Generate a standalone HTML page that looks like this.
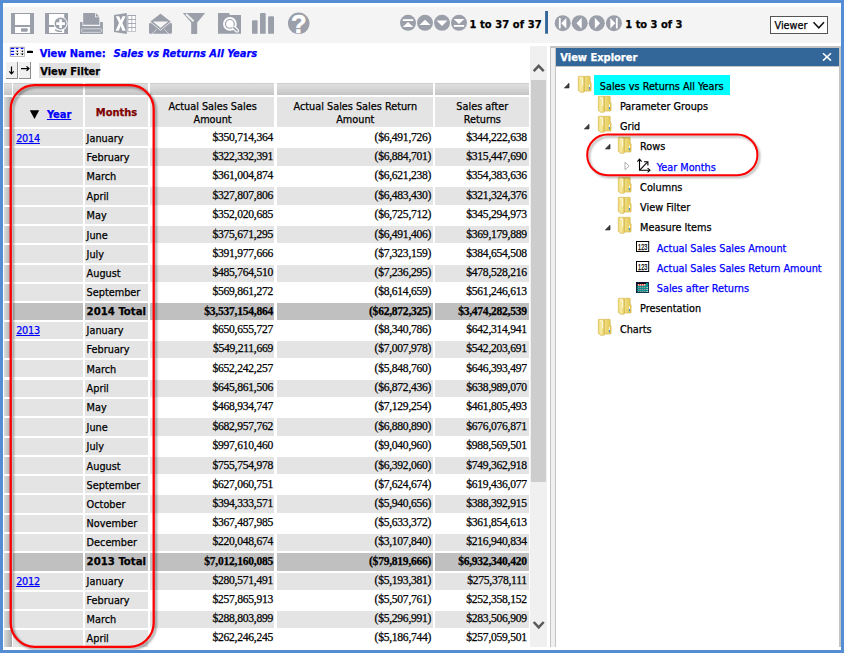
<!DOCTYPE html>
<html lang="en"><head><meta charset="utf-8"><title>Sales vs Returns All Years</title>
<style>
html,body{margin:0;padding:0;background:#fff;}
body{width:844px;height:653px;position:relative;overflow:hidden;font-family:"DejaVu Sans Condensed","Liberation Sans",sans-serif;font-size:10.8px;color:#000;}
.t{position:absolute;white-space:nowrap;line-height:16px;-webkit-text-stroke:0.25px;}
.r{position:absolute;}
svg{position:absolute;overflow:visible;}
a{color:#0000ff;text-decoration:underline;}
</style></head><body>

<div class="r" style="left:3.00px;top:7.00px;width:838.00px;height:35.70px;background:#f4f4f4;"></div>
<svg width="844" height="50" style="left:0;top:0" viewBox="0 0 844 50">
<g fill="#9a9fa9">
<!-- save -->
<rect x="11" y="13" width="23" height="21"/>
<rect x="15" y="14" width="15" height="11" fill="#fff"/>
<rect x="15" y="27" width="15" height="6" fill="#fff"/>
<rect x="21" y="28.3" width="6.7" height="3.5" rx="1"/>
<!-- save as -->
<rect x="45" y="13" width="23" height="21"/>
<rect x="49" y="14" width="15.2" height="11" fill="#fff"/>
<rect x="49" y="27" width="15.2" height="6" fill="#fff"/>
<path d="M55.2 29.6 Q56.8 31.6 62 31.3" fill="none" stroke="#9a9fa9" stroke-width="1.5"/>
<circle cx="60.6" cy="23.6" r="7" fill="#fff"/>
<circle cx="60.6" cy="23.6" r="6"/>
<path d="M59.3 19.2h2.6v3.1h3.1v2.6h-3.1v3.1h-2.6v-3.1h-3.1v-2.6h3.1z" fill="#fff"/>
<!-- print -->
<path d="M83.2 13H95v4.3h4.3v7.4H83.2z"/>
<path d="M95.8 13.1l3.4 3.4h-3.4z"/>
<path d="M80 22.1h2.5v3.9h17.6v-3.9h2.8V34H80z"/>
<rect x="81.6" y="28.8" width="19.8" height="3.5" rx="0.8" fill="none" stroke="#e4e5e8" stroke-width="0.8"/>
<!-- excel -->
<path d="M114 15l12.8-2.1V34L114 32z"/>
<path d="M115.8 16.2h3.4l1.6 4.1 1.7-4.1h3.1l-3.2 6.9 3.4 7.6h-3.4l-1.8-4.7-1.8 4.7h-3.2l3.4-7.6z" fill="#fff"/>
<rect x="127.4" y="15" width="8.6" height="16.6"/>
<g fill="#fff"><rect x="128.3" y="15.9" width="3.2" height="3.2"/><rect x="132.2" y="15.9" width="3.2" height="3.2"/>
<rect x="128.3" y="19.9" width="3.2" height="3.2"/><rect x="132.2" y="19.9" width="3.2" height="3.2"/>
<rect x="128.3" y="23.9" width="3.2" height="3.2"/><rect x="132.2" y="23.9" width="3.2" height="3.2"/>
<rect x="128.3" y="27.9" width="3.2" height="3.2"/><rect x="132.2" y="27.9" width="3.2" height="3.2"/></g>
<!-- mail -->
<rect x="149" y="22.9" width="23" height="10.9" rx="1.3"/>
<path d="M159.6 13.9q.9-.7 1.8 0L171.2 21.6 160.5 30.2 149.8 21.6z" stroke="#f0f0f1" stroke-width="0.9"/>
<path d="M152.8 21.5h15.4l-7.7 6.4z" fill="#f6f6f7"/>
<path d="M156.7 29.2l-4.6 4.7M164.3 29.2l4.6 4.7" fill="none" stroke="#e4e5e8" stroke-width="0.8"/>
<!-- filter -->
<path d="M182.8 13h22.4l-8 9.4V34h-6V22.4z"/>
<path d="M186 14l7.6 7.2" stroke="#f0f0f0" stroke-width="2" fill="none"/>
<!-- folder search -->
<path d="M218 13h11l1 2.1h11V33.8H218z"/>
<circle cx="229.9" cy="23.9" r="5.9" fill="none" stroke="#fff" stroke-width="1.9"/>
<path d="M234.4 28.2l2.5 2.3" stroke="#fff" stroke-width="4.2" stroke-linecap="round" fill="none"/>
<path d="M234 27.8l3 2.8" stroke="#9a9fa9" stroke-width="1.8" stroke-linecap="round" fill="none"/>
<circle cx="229.9" cy="23.9" r="3.8" fill="#fff"/>
<!-- chart -->
<path d="M252 21.2q0-1 1-1h3.6q1 0 1 1V33.7H252z"/>
<path d="M260 14.1q0-1 1-1h3.7q1 0 1 1V33.7H260z"/>
<path d="M268.1 17.2q0-1 1-1h3.9q1 0 1 1V33.7h-5.9z"/>
<!-- help -->
<circle cx="298.7" cy="23.3" r="10.75"/>
</g>
<text x="298.9" y="33" text-anchor="middle" font-family="Liberation Sans, sans-serif" font-weight="bold" font-size="25.5" fill="#fff" stroke="#fff" stroke-width="0.5">?</text>
</svg>
<svg width="844" height="50" style="left:0;top:0" viewBox="0 0 844 50"><circle cx="408" cy="22.8" r="8" fill="#9a9fa9"/><rect x="402.8" y="19.2" width="10.4" height="1.8" fill="#fff"/><path d="M408 22.0l5.3 5h-10.6z" fill="#fff"/><circle cx="425" cy="22.8" r="8" fill="#9a9fa9"/><path d="M425 19.8l5.5 5.2h-11z" fill="#fff"/><circle cx="442" cy="22.8" r="8" fill="#9a9fa9"/><path d="M442 26.0l5.5-5.4h-11z" fill="#fff"/><circle cx="459" cy="22.8" r="8" fill="#9a9fa9"/><rect x="453.8" y="25.0" width="10.4" height="1.8" fill="#fff"/><path d="M459 24.1l5.3-5h-10.6z" fill="#fff"/><circle cx="562.7" cy="23.2" r="8" fill="#9a9fa9"/><rect x="558.9000000000001" y="18.0" width="1.8" height="10.4" fill="#fff"/><path d="M561.3000000000001 23.2l5-5.3v10.6z" fill="#fff"/><circle cx="579.7" cy="23.2" r="8" fill="#9a9fa9"/><path d="M576.5 23.2l5.2-5.5v11z" fill="#fff"/><circle cx="596.8" cy="23.2" r="8" fill="#9a9fa9"/><path d="M600.0 23.2l-5.2-5.5v11z" fill="#fff"/><circle cx="613.9" cy="23.2" r="8" fill="#9a9fa9"/><rect x="615.9" y="18.0" width="1.8" height="10.4" fill="#fff"/><path d="M615.3 23.2l-5-5.3v10.6z" fill="#fff"/><rect x="545.1" y="11" width="2.9" height="22.7" fill="#336699"/></svg>
<div class="t" style="top:16.69px;font-size:11px;font-weight:bold;letter-spacing:0.12px;left:469.40px;">1 to 37 of 37</div>
<div class="t" style="top:16.69px;font-size:11px;font-weight:bold;left:625.30px;">1 to 3 of 3</div>
<div class="r" style="left:770px;top:16px;width:56px;height:16px;border:1px solid #555;background:#fff"></div>
<div class="t" style="top:18.46px;font-size:10.8px;left:774.50px;">Viewer</div>
<svg width="14" height="10" style="left:812px;top:20px" viewBox="0 0 14 10"><path d="M1.5 2.2L6.8 7.8 12 2.2" fill="none" stroke="#111" stroke-width="1.5"/></svg>
<svg width="26" height="12" style="left:9px;top:46px" viewBox="0 0 26 12">
<rect x="1" y="1" width="14.8" height="9.9" fill="#fff"/>
<path d="M1.3 10.6V1.3H15.7" fill="none" stroke="#777" stroke-width="0.7"/>
<path d="M1.3 10.5H15.5V1.5" fill="none" stroke="#aaa" stroke-width="0.8"/>
<g fill="#0000f0"><rect x="1.8" y="1.8" width="3.4" height="1.3"/><rect x="6.8" y="1.8" width="2.6" height="1.3"/><rect x="11.8" y="1.8" width="2.5" height="1.3"/>
<rect x="1.8" y="4.8" width="3.4" height="1.3"/><rect x="1.8" y="7.8" width="3.4" height="1.3"/></g>
<g fill="#bbb"><rect x="6.4" y="4.3" width="3.4" height="0.8"/><rect x="11.3" y="4.3" width="3.4" height="0.8"/></g>
<g fill="#888"><rect x="6.4" y="7.1" width="3.4" height="1"/><rect x="11.3" y="7.1" width="3.4" height="1"/></g>
<g fill="#000"><circle cx="8.4" cy="5.5" r="0.75"/><circle cx="13.4" cy="5.5" r="0.75"/><circle cx="8.4" cy="8.4" r="0.75"/><circle cx="13.4" cy="8.4" r="0.75"/></g>
<rect x="18" y="4.8" width="6" height="2.2" rx="0.6" fill="#000"/></svg>
<div class="t" style="top:45.69px;font-size:11px;font-weight:bold;color:#0000ff;left:39.70px;">View Name:</div>
<div class="t" style="top:45.69px;font-size:11px;font-weight:bold;font-style:italic;color:#0000ff;left:113.50px;">Sales vs Returns All Years</div>
<div class="r" style="left:6px;top:61.5px;width:10.600000000000001px;height:16px;background:#f0f0f0;border-right:1px solid #8c8c8c;border-bottom:1px solid #8c8c8c;"></div>
<div class="r" style="left:19.3px;top:61.5px;width:10.3px;height:16px;background:#f0f0f0;border-right:1px solid #8c8c8c;border-bottom:1px solid #8c8c8c;"></div>
<svg width="30" height="20" style="left:4px;top:60px" viewBox="0 0 30 20">
<g stroke="#000" stroke-width="1.2" fill="none"><path d="M7.5 6.4V13.6M5.3 11.3L7.5 13.8 9.7 11.3"/><path d="M17 8.6H24.8M22.5 6.4L25 8.6 22.5 10.8"/></g></svg>
<div class="r" style="left:38.80px;top:63.20px;width:61.20px;height:14.50px;background:#e0e0e0;"></div>
<div class="t" style="top:64.39px;font-size:11px;font-weight:bold;left:40.20px;">View Filter</div>
<div class="r" style="left:4.00px;top:83.10px;width:8.00px;height:12.20px;background:linear-gradient(#bcbcbc 0,#dedede 8%,#d8d8d8 40%,#c4c4c4 100%);"></div>
<div class="r" style="left:13.30px;top:83.10px;width:69.50px;height:12.20px;background:linear-gradient(#bcbcbc 0,#dedede 8%,#d8d8d8 40%,#c4c4c4 100%);"></div>
<div class="r" style="left:84.70px;top:83.10px;width:63.10px;height:12.20px;background:linear-gradient(#bcbcbc 0,#dedede 8%,#d8d8d8 40%,#c4c4c4 100%);"></div>
<div class="r" style="left:149.60px;top:83.10px;width:124.50px;height:12.20px;background:linear-gradient(#bcbcbc 0,#dedede 8%,#d8d8d8 40%,#c4c4c4 100%);"></div>
<div class="r" style="left:276.60px;top:83.10px;width:156.20px;height:12.20px;background:linear-gradient(#bcbcbc 0,#dedede 8%,#d8d8d8 40%,#c4c4c4 100%);"></div>
<div class="r" style="left:434.90px;top:83.10px;width:94.20px;height:12.20px;background:linear-gradient(#bcbcbc 0,#dedede 8%,#d8d8d8 40%,#c4c4c4 100%);"></div>
<div class="r" style="left:4.00px;top:96.80px;width:8.00px;height:30.00px;background:linear-gradient(90deg,#dcdcdc,#a8a8a8);"></div>
<div class="r" style="left:13.30px;top:96.80px;width:69.50px;height:30.00px;background:#e4e4e4;"></div>
<div class="r" style="left:84.70px;top:96.80px;width:63.10px;height:30.00px;background:#e4e4e4;"></div>
<div class="r" style="left:149.60px;top:96.80px;width:124.50px;height:30.00px;background:#e4e4e4;"></div>
<div class="r" style="left:276.60px;top:96.80px;width:156.20px;height:30.00px;background:#e4e4e4;"></div>
<div class="r" style="left:434.90px;top:96.80px;width:94.20px;height:30.00px;background:#e4e4e4;"></div>
<svg width="12" height="10" style="left:29px;top:109px" viewBox="0 0 12 10"><path d="M0.8 1.2h9.4L5.5 9.9z" fill="#000"/></svg>
<div class="t" style="top:107.49px;font-size:11px;font-weight:bold;color:#0000ff;left:46.90px;"><a>Year</a></div>
<div class="t" style="top:104.99px;font-size:11px;font-weight:bold;color:#800000;left:-33.50px;width:300px;text-align:center;">Months</div>
<div class="t" style="top:99.06px;font-size:10.8px;left:62.60px;width:300px;text-align:center;">Actual Sales Sales</div>
<div class="t" style="top:112.06px;font-size:10.8px;left:62.60px;width:300px;text-align:center;">Amount</div>
<div class="t" style="top:99.06px;font-size:10.8px;left:205.30px;width:300px;text-align:center;">Actual Sales Sales Return</div>
<div class="t" style="top:112.06px;font-size:10.8px;left:205.30px;width:300px;text-align:center;">Amount</div>
<div class="t" style="top:99.06px;font-size:10.8px;left:332.30px;width:300px;text-align:center;">Sales after</div>
<div class="t" style="top:112.06px;font-size:10.8px;left:332.30px;width:300px;text-align:center;">Returns</div>
<div class="r" style="left:4.00px;top:129.10px;width:8.00px;height:17.37px;background:linear-gradient(90deg,#dcdcdc,#a8a8a8);"></div>
<div class="r" style="left:13.30px;top:129.10px;width:69.50px;height:17.37px;background:#e4e4e4;"></div>
<div class="r" style="left:84.70px;top:129.10px;width:63.10px;height:17.37px;background:#e4e4e4;"></div>
<div class="t" style="top:130.66px;font-size:10.8px;color:#0000ff;letter-spacing:-0.25px;left:16.20px;"><a>2014</a></div>
<div class="t" style="top:130.66px;font-size:10.8px;left:86.60px;">January</div>
<div class="t" style="top:129.69px;font-size:11.6px;font-family:'Liberation Serif',serif;letter-spacing:-0.27px;right:571.00px;">$350,714,364</div>
<div class="t" style="top:129.69px;font-size:11.6px;font-family:'Liberation Serif',serif;letter-spacing:-0.27px;right:412.80px;">($6,491,726)</div>
<div class="t" style="top:129.69px;font-size:11.6px;font-family:'Liberation Serif',serif;letter-spacing:-0.27px;right:317.20px;">$344,222,638</div>
<div class="r" style="left:4.00px;top:148.47px;width:8.00px;height:17.37px;background:linear-gradient(90deg,#dcdcdc,#a8a8a8);"></div>
<div class="r" style="left:13.30px;top:148.47px;width:69.50px;height:17.37px;background:#e4e4e4;"></div>
<div class="r" style="left:84.70px;top:148.47px;width:63.10px;height:17.37px;background:#e4e4e4;"></div>
<div class="r" style="left:149.60px;top:148.47px;width:124.50px;height:17.37px;background:#e4e4e4;"></div>
<div class="r" style="left:276.60px;top:148.47px;width:156.20px;height:17.37px;background:#e4e4e4;"></div>
<div class="r" style="left:434.90px;top:148.47px;width:94.20px;height:17.37px;background:#e4e4e4;"></div>
<div class="t" style="top:150.03px;font-size:10.8px;left:86.60px;">February</div>
<div class="t" style="top:149.05px;font-size:11.6px;font-family:'Liberation Serif',serif;letter-spacing:-0.27px;right:571.00px;">$322,332,391</div>
<div class="t" style="top:149.05px;font-size:11.6px;font-family:'Liberation Serif',serif;letter-spacing:-0.27px;right:412.80px;">($6,884,701)</div>
<div class="t" style="top:149.05px;font-size:11.6px;font-family:'Liberation Serif',serif;letter-spacing:-0.27px;right:317.20px;">$315,447,690</div>
<div class="r" style="left:4.00px;top:167.83px;width:8.00px;height:17.37px;background:linear-gradient(90deg,#dcdcdc,#a8a8a8);"></div>
<div class="r" style="left:13.30px;top:167.83px;width:69.50px;height:17.37px;background:#e4e4e4;"></div>
<div class="r" style="left:84.70px;top:167.83px;width:63.10px;height:17.37px;background:#e4e4e4;"></div>
<div class="t" style="top:169.40px;font-size:10.8px;left:86.60px;">March</div>
<div class="t" style="top:168.42px;font-size:11.6px;font-family:'Liberation Serif',serif;letter-spacing:-0.27px;right:571.00px;">$361,004,874</div>
<div class="t" style="top:168.42px;font-size:11.6px;font-family:'Liberation Serif',serif;letter-spacing:-0.27px;right:412.80px;">($6,621,238)</div>
<div class="t" style="top:168.42px;font-size:11.6px;font-family:'Liberation Serif',serif;letter-spacing:-0.27px;right:317.20px;">$354,383,636</div>
<div class="r" style="left:4.00px;top:187.20px;width:8.00px;height:17.50px;background:linear-gradient(90deg,#dcdcdc,#a8a8a8);"></div>
<div class="r" style="left:13.30px;top:187.20px;width:69.50px;height:17.50px;background:#e4e4e4;"></div>
<div class="r" style="left:84.70px;top:187.20px;width:63.10px;height:17.50px;background:#e4e4e4;"></div>
<div class="r" style="left:149.60px;top:187.20px;width:124.50px;height:17.50px;background:#e4e4e4;"></div>
<div class="r" style="left:276.60px;top:187.20px;width:156.20px;height:17.50px;background:#e4e4e4;"></div>
<div class="r" style="left:434.90px;top:187.20px;width:94.20px;height:17.50px;background:#e4e4e4;"></div>
<div class="t" style="top:188.76px;font-size:10.8px;left:86.60px;">April</div>
<div class="t" style="top:187.78px;font-size:11.6px;font-family:'Liberation Serif',serif;letter-spacing:-0.27px;right:571.00px;">$327,807,806</div>
<div class="t" style="top:187.78px;font-size:11.6px;font-family:'Liberation Serif',serif;letter-spacing:-0.27px;right:412.80px;">($6,483,430)</div>
<div class="t" style="top:187.78px;font-size:11.6px;font-family:'Liberation Serif',serif;letter-spacing:-0.27px;right:317.20px;">$321,324,376</div>
<div class="r" style="left:4.00px;top:206.70px;width:8.00px;height:17.50px;background:linear-gradient(90deg,#dcdcdc,#a8a8a8);"></div>
<div class="r" style="left:13.30px;top:206.70px;width:69.50px;height:17.50px;background:#e4e4e4;"></div>
<div class="r" style="left:84.70px;top:206.70px;width:63.10px;height:17.50px;background:#e4e4e4;"></div>
<div class="t" style="top:208.26px;font-size:10.8px;left:86.60px;">May</div>
<div class="t" style="top:207.28px;font-size:11.6px;font-family:'Liberation Serif',serif;letter-spacing:-0.27px;right:571.00px;">$352,020,685</div>
<div class="t" style="top:207.28px;font-size:11.6px;font-family:'Liberation Serif',serif;letter-spacing:-0.27px;right:412.80px;">($6,725,712)</div>
<div class="t" style="top:207.28px;font-size:11.6px;font-family:'Liberation Serif',serif;letter-spacing:-0.27px;right:317.20px;">$345,294,973</div>
<div class="r" style="left:4.00px;top:226.20px;width:8.00px;height:17.23px;background:linear-gradient(90deg,#dcdcdc,#a8a8a8);"></div>
<div class="r" style="left:13.30px;top:226.20px;width:69.50px;height:17.23px;background:#e4e4e4;"></div>
<div class="r" style="left:84.70px;top:226.20px;width:63.10px;height:17.23px;background:#e4e4e4;"></div>
<div class="r" style="left:149.60px;top:226.20px;width:124.50px;height:17.23px;background:#e4e4e4;"></div>
<div class="r" style="left:276.60px;top:226.20px;width:156.20px;height:17.23px;background:#e4e4e4;"></div>
<div class="r" style="left:434.90px;top:226.20px;width:94.20px;height:17.23px;background:#e4e4e4;"></div>
<div class="t" style="top:227.76px;font-size:10.8px;left:86.60px;">June</div>
<div class="t" style="top:226.78px;font-size:11.6px;font-family:'Liberation Serif',serif;letter-spacing:-0.27px;right:571.00px;">$375,671,295</div>
<div class="t" style="top:226.78px;font-size:11.6px;font-family:'Liberation Serif',serif;letter-spacing:-0.27px;right:412.80px;">($6,491,406)</div>
<div class="t" style="top:226.78px;font-size:11.6px;font-family:'Liberation Serif',serif;letter-spacing:-0.27px;right:317.20px;">$369,179,889</div>
<div class="r" style="left:4.00px;top:245.43px;width:8.00px;height:17.22px;background:linear-gradient(90deg,#dcdcdc,#a8a8a8);"></div>
<div class="r" style="left:13.30px;top:245.43px;width:69.50px;height:17.22px;background:#e4e4e4;"></div>
<div class="r" style="left:84.70px;top:245.43px;width:63.10px;height:17.22px;background:#e4e4e4;"></div>
<div class="t" style="top:246.99px;font-size:10.8px;left:86.60px;">July</div>
<div class="t" style="top:246.01px;font-size:11.6px;font-family:'Liberation Serif',serif;letter-spacing:-0.27px;right:571.00px;">$391,977,666</div>
<div class="t" style="top:246.01px;font-size:11.6px;font-family:'Liberation Serif',serif;letter-spacing:-0.27px;right:412.80px;">($7,323,159)</div>
<div class="t" style="top:246.01px;font-size:11.6px;font-family:'Liberation Serif',serif;letter-spacing:-0.27px;right:317.20px;">$384,654,508</div>
<div class="r" style="left:4.00px;top:264.65px;width:8.00px;height:17.23px;background:linear-gradient(90deg,#dcdcdc,#a8a8a8);"></div>
<div class="r" style="left:13.30px;top:264.65px;width:69.50px;height:17.23px;background:#e4e4e4;"></div>
<div class="r" style="left:84.70px;top:264.65px;width:63.10px;height:17.23px;background:#e4e4e4;"></div>
<div class="r" style="left:149.60px;top:264.65px;width:124.50px;height:17.23px;background:#e4e4e4;"></div>
<div class="r" style="left:276.60px;top:264.65px;width:156.20px;height:17.23px;background:#e4e4e4;"></div>
<div class="r" style="left:434.90px;top:264.65px;width:94.20px;height:17.23px;background:#e4e4e4;"></div>
<div class="t" style="top:266.21px;font-size:10.8px;left:86.60px;">August</div>
<div class="t" style="top:265.23px;font-size:11.6px;font-family:'Liberation Serif',serif;letter-spacing:-0.27px;right:571.00px;">$485,764,510</div>
<div class="t" style="top:265.23px;font-size:11.6px;font-family:'Liberation Serif',serif;letter-spacing:-0.27px;right:412.80px;">($7,236,295)</div>
<div class="t" style="top:265.23px;font-size:11.6px;font-family:'Liberation Serif',serif;letter-spacing:-0.27px;right:317.20px;">$478,528,216</div>
<div class="r" style="left:4.00px;top:283.88px;width:8.00px;height:17.23px;background:linear-gradient(90deg,#dcdcdc,#a8a8a8);"></div>
<div class="r" style="left:13.30px;top:283.88px;width:69.50px;height:17.23px;background:#e4e4e4;"></div>
<div class="r" style="left:84.70px;top:283.88px;width:63.10px;height:17.23px;background:#e4e4e4;"></div>
<div class="t" style="top:285.44px;font-size:10.8px;left:86.60px;">September</div>
<div class="t" style="top:284.46px;font-size:11.6px;font-family:'Liberation Serif',serif;letter-spacing:-0.27px;right:571.00px;">$569,861,272</div>
<div class="t" style="top:284.46px;font-size:11.6px;font-family:'Liberation Serif',serif;letter-spacing:-0.27px;right:412.80px;">($8,614,659)</div>
<div class="t" style="top:284.46px;font-size:11.6px;font-family:'Liberation Serif',serif;letter-spacing:-0.27px;right:317.20px;">$561,246,613</div>
<div class="r" style="left:4.00px;top:303.10px;width:8.00px;height:16.50px;background:linear-gradient(90deg,#dcdcdc,#a8a8a8);"></div>
<div class="r" style="left:13.30px;top:303.10px;width:69.50px;height:16.50px;background:#c0c0c0;"></div>
<div class="r" style="left:84.70px;top:303.10px;width:63.10px;height:16.50px;background:#c0c0c0;"></div>
<div class="r" style="left:149.60px;top:303.10px;width:124.50px;height:16.50px;background:#c0c0c0;"></div>
<div class="r" style="left:276.60px;top:303.10px;width:156.20px;height:16.50px;background:#c0c0c0;"></div>
<div class="r" style="left:434.90px;top:303.10px;width:94.20px;height:16.50px;background:#c0c0c0;"></div>
<div class="t" style="top:304.49px;font-size:11.3px;font-weight:bold;left:86.60px;">2014 Total</div>
<div class="t" style="top:303.69px;font-size:11.6px;font-family:'Liberation Serif',serif;font-weight:bold;letter-spacing:-0.27px;right:571.00px;">$3,537,154,864</div>
<div class="t" style="top:303.69px;font-size:11.6px;font-family:'Liberation Serif',serif;font-weight:bold;letter-spacing:-0.27px;right:412.80px;">($62,872,325)</div>
<div class="t" style="top:303.69px;font-size:11.6px;font-family:'Liberation Serif',serif;font-weight:bold;letter-spacing:-0.27px;right:317.20px;">$3,474,282,539</div>
<div class="r" style="left:4.00px;top:321.60px;width:8.00px;height:17.30px;background:linear-gradient(90deg,#dcdcdc,#a8a8a8);"></div>
<div class="r" style="left:13.30px;top:321.60px;width:69.50px;height:17.30px;background:#e4e4e4;"></div>
<div class="r" style="left:84.70px;top:321.60px;width:63.10px;height:17.30px;background:#e4e4e4;"></div>
<div class="t" style="top:323.16px;font-size:10.8px;color:#0000ff;letter-spacing:-0.25px;left:16.20px;"><a>2013</a></div>
<div class="t" style="top:323.16px;font-size:10.8px;left:86.60px;">January</div>
<div class="t" style="top:322.19px;font-size:11.6px;font-family:'Liberation Serif',serif;letter-spacing:-0.27px;right:571.00px;">$650,655,727</div>
<div class="t" style="top:322.19px;font-size:11.6px;font-family:'Liberation Serif',serif;letter-spacing:-0.27px;right:412.80px;">($8,340,786)</div>
<div class="t" style="top:322.19px;font-size:11.6px;font-family:'Liberation Serif',serif;letter-spacing:-0.27px;right:317.20px;">$642,314,941</div>
<div class="r" style="left:4.00px;top:340.90px;width:8.00px;height:17.30px;background:linear-gradient(90deg,#dcdcdc,#a8a8a8);"></div>
<div class="r" style="left:13.30px;top:340.90px;width:69.50px;height:17.30px;background:#e4e4e4;"></div>
<div class="r" style="left:84.70px;top:340.90px;width:63.10px;height:17.30px;background:#e4e4e4;"></div>
<div class="r" style="left:149.60px;top:340.90px;width:124.50px;height:17.30px;background:#e4e4e4;"></div>
<div class="r" style="left:276.60px;top:340.90px;width:156.20px;height:17.30px;background:#e4e4e4;"></div>
<div class="r" style="left:434.90px;top:340.90px;width:94.20px;height:17.30px;background:#e4e4e4;"></div>
<div class="t" style="top:342.46px;font-size:10.8px;left:86.60px;">February</div>
<div class="t" style="top:341.49px;font-size:11.6px;font-family:'Liberation Serif',serif;letter-spacing:-0.27px;right:571.00px;">$549,211,669</div>
<div class="t" style="top:341.49px;font-size:11.6px;font-family:'Liberation Serif',serif;letter-spacing:-0.27px;right:412.80px;">($7,007,978)</div>
<div class="t" style="top:341.49px;font-size:11.6px;font-family:'Liberation Serif',serif;letter-spacing:-0.27px;right:317.20px;">$542,203,691</div>
<div class="r" style="left:4.00px;top:360.20px;width:8.00px;height:17.30px;background:linear-gradient(90deg,#dcdcdc,#a8a8a8);"></div>
<div class="r" style="left:13.30px;top:360.20px;width:69.50px;height:17.30px;background:#e4e4e4;"></div>
<div class="r" style="left:84.70px;top:360.20px;width:63.10px;height:17.30px;background:#e4e4e4;"></div>
<div class="t" style="top:361.76px;font-size:10.8px;left:86.60px;">March</div>
<div class="t" style="top:360.79px;font-size:11.6px;font-family:'Liberation Serif',serif;letter-spacing:-0.27px;right:571.00px;">$652,242,257</div>
<div class="t" style="top:360.79px;font-size:11.6px;font-family:'Liberation Serif',serif;letter-spacing:-0.27px;right:412.80px;">($5,848,760)</div>
<div class="t" style="top:360.79px;font-size:11.6px;font-family:'Liberation Serif',serif;letter-spacing:-0.27px;right:317.20px;">$646,393,497</div>
<div class="r" style="left:4.00px;top:379.50px;width:8.00px;height:17.30px;background:linear-gradient(90deg,#dcdcdc,#a8a8a8);"></div>
<div class="r" style="left:13.30px;top:379.50px;width:69.50px;height:17.30px;background:#e4e4e4;"></div>
<div class="r" style="left:84.70px;top:379.50px;width:63.10px;height:17.30px;background:#e4e4e4;"></div>
<div class="r" style="left:149.60px;top:379.50px;width:124.50px;height:17.30px;background:#e4e4e4;"></div>
<div class="r" style="left:276.60px;top:379.50px;width:156.20px;height:17.30px;background:#e4e4e4;"></div>
<div class="r" style="left:434.90px;top:379.50px;width:94.20px;height:17.30px;background:#e4e4e4;"></div>
<div class="t" style="top:381.06px;font-size:10.8px;left:86.60px;">April</div>
<div class="t" style="top:380.08px;font-size:11.6px;font-family:'Liberation Serif',serif;letter-spacing:-0.27px;right:571.00px;">$645,861,506</div>
<div class="t" style="top:380.08px;font-size:11.6px;font-family:'Liberation Serif',serif;letter-spacing:-0.27px;right:412.80px;">($6,872,436)</div>
<div class="t" style="top:380.08px;font-size:11.6px;font-family:'Liberation Serif',serif;letter-spacing:-0.27px;right:317.20px;">$638,989,070</div>
<div class="r" style="left:4.00px;top:398.80px;width:8.00px;height:17.30px;background:linear-gradient(90deg,#dcdcdc,#a8a8a8);"></div>
<div class="r" style="left:13.30px;top:398.80px;width:69.50px;height:17.30px;background:#e4e4e4;"></div>
<div class="r" style="left:84.70px;top:398.80px;width:63.10px;height:17.30px;background:#e4e4e4;"></div>
<div class="t" style="top:400.36px;font-size:10.8px;left:86.60px;">May</div>
<div class="t" style="top:399.38px;font-size:11.6px;font-family:'Liberation Serif',serif;letter-spacing:-0.27px;right:571.00px;">$468,934,747</div>
<div class="t" style="top:399.38px;font-size:11.6px;font-family:'Liberation Serif',serif;letter-spacing:-0.27px;right:412.80px;">($7,129,254)</div>
<div class="t" style="top:399.38px;font-size:11.6px;font-family:'Liberation Serif',serif;letter-spacing:-0.27px;right:317.20px;">$461,805,493</div>
<div class="r" style="left:4.00px;top:418.10px;width:8.00px;height:17.45px;background:linear-gradient(90deg,#dcdcdc,#a8a8a8);"></div>
<div class="r" style="left:13.30px;top:418.10px;width:69.50px;height:17.45px;background:#e4e4e4;"></div>
<div class="r" style="left:84.70px;top:418.10px;width:63.10px;height:17.45px;background:#e4e4e4;"></div>
<div class="r" style="left:149.60px;top:418.10px;width:124.50px;height:17.45px;background:#e4e4e4;"></div>
<div class="r" style="left:276.60px;top:418.10px;width:156.20px;height:17.45px;background:#e4e4e4;"></div>
<div class="r" style="left:434.90px;top:418.10px;width:94.20px;height:17.45px;background:#e4e4e4;"></div>
<div class="t" style="top:419.66px;font-size:10.8px;left:86.60px;">June</div>
<div class="t" style="top:418.69px;font-size:11.6px;font-family:'Liberation Serif',serif;letter-spacing:-0.27px;right:571.00px;">$682,957,762</div>
<div class="t" style="top:418.69px;font-size:11.6px;font-family:'Liberation Serif',serif;letter-spacing:-0.27px;right:412.80px;">($6,880,890)</div>
<div class="t" style="top:418.69px;font-size:11.6px;font-family:'Liberation Serif',serif;letter-spacing:-0.27px;right:317.20px;">$676,076,871</div>
<div class="r" style="left:4.00px;top:437.55px;width:8.00px;height:17.45px;background:linear-gradient(90deg,#dcdcdc,#a8a8a8);"></div>
<div class="r" style="left:13.30px;top:437.55px;width:69.50px;height:17.45px;background:#e4e4e4;"></div>
<div class="r" style="left:84.70px;top:437.55px;width:63.10px;height:17.45px;background:#e4e4e4;"></div>
<div class="t" style="top:439.11px;font-size:10.8px;left:86.60px;">July</div>
<div class="t" style="top:438.13px;font-size:11.6px;font-family:'Liberation Serif',serif;letter-spacing:-0.27px;right:571.00px;">$997,610,460</div>
<div class="t" style="top:438.13px;font-size:11.6px;font-family:'Liberation Serif',serif;letter-spacing:-0.27px;right:412.80px;">($9,040,960)</div>
<div class="t" style="top:438.13px;font-size:11.6px;font-family:'Liberation Serif',serif;letter-spacing:-0.27px;right:317.20px;">$988,569,501</div>
<div class="r" style="left:4.00px;top:457.00px;width:8.00px;height:17.20px;background:linear-gradient(90deg,#dcdcdc,#a8a8a8);"></div>
<div class="r" style="left:13.30px;top:457.00px;width:69.50px;height:17.20px;background:#e4e4e4;"></div>
<div class="r" style="left:84.70px;top:457.00px;width:63.10px;height:17.20px;background:#e4e4e4;"></div>
<div class="r" style="left:149.60px;top:457.00px;width:124.50px;height:17.20px;background:#e4e4e4;"></div>
<div class="r" style="left:276.60px;top:457.00px;width:156.20px;height:17.20px;background:#e4e4e4;"></div>
<div class="r" style="left:434.90px;top:457.00px;width:94.20px;height:17.20px;background:#e4e4e4;"></div>
<div class="t" style="top:458.56px;font-size:10.8px;left:86.60px;">August</div>
<div class="t" style="top:457.58px;font-size:11.6px;font-family:'Liberation Serif',serif;letter-spacing:-0.27px;right:571.00px;">$755,754,978</div>
<div class="t" style="top:457.58px;font-size:11.6px;font-family:'Liberation Serif',serif;letter-spacing:-0.27px;right:412.80px;">($6,392,060)</div>
<div class="t" style="top:457.58px;font-size:11.6px;font-family:'Liberation Serif',serif;letter-spacing:-0.27px;right:317.20px;">$749,362,918</div>
<div class="r" style="left:4.00px;top:476.20px;width:8.00px;height:17.20px;background:linear-gradient(90deg,#dcdcdc,#a8a8a8);"></div>
<div class="r" style="left:13.30px;top:476.20px;width:69.50px;height:17.20px;background:#e4e4e4;"></div>
<div class="r" style="left:84.70px;top:476.20px;width:63.10px;height:17.20px;background:#e4e4e4;"></div>
<div class="t" style="top:477.76px;font-size:10.8px;left:86.60px;">September</div>
<div class="t" style="top:476.78px;font-size:11.6px;font-family:'Liberation Serif',serif;letter-spacing:-0.27px;right:571.00px;">$627,060,751</div>
<div class="t" style="top:476.78px;font-size:11.6px;font-family:'Liberation Serif',serif;letter-spacing:-0.27px;right:412.80px;">($7,624,674)</div>
<div class="t" style="top:476.78px;font-size:11.6px;font-family:'Liberation Serif',serif;letter-spacing:-0.27px;right:317.20px;">$619,436,077</div>
<div class="r" style="left:4.00px;top:495.40px;width:8.00px;height:17.20px;background:linear-gradient(90deg,#dcdcdc,#a8a8a8);"></div>
<div class="r" style="left:13.30px;top:495.40px;width:69.50px;height:17.20px;background:#e4e4e4;"></div>
<div class="r" style="left:84.70px;top:495.40px;width:63.10px;height:17.20px;background:#e4e4e4;"></div>
<div class="r" style="left:149.60px;top:495.40px;width:124.50px;height:17.20px;background:#e4e4e4;"></div>
<div class="r" style="left:276.60px;top:495.40px;width:156.20px;height:17.20px;background:#e4e4e4;"></div>
<div class="r" style="left:434.90px;top:495.40px;width:94.20px;height:17.20px;background:#e4e4e4;"></div>
<div class="t" style="top:496.96px;font-size:10.8px;left:86.60px;">October</div>
<div class="t" style="top:495.98px;font-size:11.6px;font-family:'Liberation Serif',serif;letter-spacing:-0.27px;right:571.00px;">$394,333,571</div>
<div class="t" style="top:495.98px;font-size:11.6px;font-family:'Liberation Serif',serif;letter-spacing:-0.27px;right:412.80px;">($5,940,656)</div>
<div class="t" style="top:495.98px;font-size:11.6px;font-family:'Liberation Serif',serif;letter-spacing:-0.27px;right:317.20px;">$388,392,915</div>
<div class="r" style="left:4.00px;top:514.60px;width:8.00px;height:17.20px;background:linear-gradient(90deg,#dcdcdc,#a8a8a8);"></div>
<div class="r" style="left:13.30px;top:514.60px;width:69.50px;height:17.20px;background:#e4e4e4;"></div>
<div class="r" style="left:84.70px;top:514.60px;width:63.10px;height:17.20px;background:#e4e4e4;"></div>
<div class="t" style="top:516.16px;font-size:10.8px;left:86.60px;">November</div>
<div class="t" style="top:515.19px;font-size:11.6px;font-family:'Liberation Serif',serif;letter-spacing:-0.27px;right:571.00px;">$367,487,985</div>
<div class="t" style="top:515.19px;font-size:11.6px;font-family:'Liberation Serif',serif;letter-spacing:-0.27px;right:412.80px;">($5,633,372)</div>
<div class="t" style="top:515.19px;font-size:11.6px;font-family:'Liberation Serif',serif;letter-spacing:-0.27px;right:317.20px;">$361,854,613</div>
<div class="r" style="left:4.00px;top:533.80px;width:8.00px;height:17.20px;background:linear-gradient(90deg,#dcdcdc,#a8a8a8);"></div>
<div class="r" style="left:13.30px;top:533.80px;width:69.50px;height:17.20px;background:#e4e4e4;"></div>
<div class="r" style="left:84.70px;top:533.80px;width:63.10px;height:17.20px;background:#e4e4e4;"></div>
<div class="r" style="left:149.60px;top:533.80px;width:124.50px;height:17.20px;background:#e4e4e4;"></div>
<div class="r" style="left:276.60px;top:533.80px;width:156.20px;height:17.20px;background:#e4e4e4;"></div>
<div class="r" style="left:434.90px;top:533.80px;width:94.20px;height:17.20px;background:#e4e4e4;"></div>
<div class="t" style="top:535.36px;font-size:10.8px;left:86.60px;">December</div>
<div class="t" style="top:534.38px;font-size:11.6px;font-family:'Liberation Serif',serif;letter-spacing:-0.27px;right:571.00px;">$220,048,674</div>
<div class="t" style="top:534.38px;font-size:11.6px;font-family:'Liberation Serif',serif;letter-spacing:-0.27px;right:412.80px;">($3,107,840)</div>
<div class="t" style="top:534.38px;font-size:11.6px;font-family:'Liberation Serif',serif;letter-spacing:-0.27px;right:317.20px;">$216,940,834</div>
<div class="r" style="left:4.00px;top:553.00px;width:8.00px;height:17.90px;background:linear-gradient(90deg,#dcdcdc,#a8a8a8);"></div>
<div class="r" style="left:13.30px;top:553.00px;width:69.50px;height:17.90px;background:#c0c0c0;"></div>
<div class="r" style="left:84.70px;top:553.00px;width:63.10px;height:17.90px;background:#c0c0c0;"></div>
<div class="r" style="left:149.60px;top:553.00px;width:124.50px;height:17.90px;background:#c0c0c0;"></div>
<div class="r" style="left:276.60px;top:553.00px;width:156.20px;height:17.90px;background:#c0c0c0;"></div>
<div class="r" style="left:434.90px;top:553.00px;width:94.20px;height:17.90px;background:#c0c0c0;"></div>
<div class="t" style="top:554.39px;font-size:11.3px;font-weight:bold;left:86.60px;">2013 Total</div>
<div class="t" style="top:553.59px;font-size:11.6px;font-family:'Liberation Serif',serif;font-weight:bold;letter-spacing:-0.27px;right:571.00px;">$7,012,160,085</div>
<div class="t" style="top:553.59px;font-size:11.6px;font-family:'Liberation Serif',serif;font-weight:bold;letter-spacing:-0.27px;right:412.80px;">($79,819,666)</div>
<div class="t" style="top:553.59px;font-size:11.6px;font-family:'Liberation Serif',serif;font-weight:bold;letter-spacing:-0.27px;right:317.20px;">$6,932,340,420</div>
<div class="r" style="left:4.00px;top:572.90px;width:8.00px;height:16.70px;background:linear-gradient(90deg,#dcdcdc,#a8a8a8);"></div>
<div class="r" style="left:13.30px;top:572.90px;width:69.50px;height:16.70px;background:#e4e4e4;"></div>
<div class="r" style="left:84.70px;top:572.90px;width:63.10px;height:16.70px;background:#e4e4e4;"></div>
<div class="r" style="left:149.60px;top:572.90px;width:124.50px;height:16.70px;background:#e4e4e4;"></div>
<div class="r" style="left:276.60px;top:572.90px;width:156.20px;height:16.70px;background:#e4e4e4;"></div>
<div class="r" style="left:434.90px;top:572.90px;width:94.20px;height:16.70px;background:#e4e4e4;"></div>
<div class="t" style="top:574.46px;font-size:10.8px;color:#0000ff;letter-spacing:-0.25px;left:16.20px;"><a>2012</a></div>
<div class="t" style="top:574.46px;font-size:10.8px;left:86.60px;">January</div>
<div class="t" style="top:573.49px;font-size:11.6px;font-family:'Liberation Serif',serif;letter-spacing:-0.27px;right:571.00px;">$280,571,491</div>
<div class="t" style="top:573.49px;font-size:11.6px;font-family:'Liberation Serif',serif;letter-spacing:-0.27px;right:412.80px;">($5,193,381)</div>
<div class="t" style="top:573.49px;font-size:11.6px;font-family:'Liberation Serif',serif;letter-spacing:-0.27px;right:317.20px;">$275,378,111</div>
<div class="r" style="left:4.00px;top:591.60px;width:8.00px;height:17.10px;background:linear-gradient(90deg,#dcdcdc,#a8a8a8);"></div>
<div class="r" style="left:13.30px;top:591.60px;width:69.50px;height:17.10px;background:#e4e4e4;"></div>
<div class="r" style="left:84.70px;top:591.60px;width:63.10px;height:17.10px;background:#e4e4e4;"></div>
<div class="t" style="top:593.16px;font-size:10.8px;left:86.60px;">February</div>
<div class="t" style="top:592.19px;font-size:11.6px;font-family:'Liberation Serif',serif;letter-spacing:-0.27px;right:571.00px;">$257,865,913</div>
<div class="t" style="top:592.19px;font-size:11.6px;font-family:'Liberation Serif',serif;letter-spacing:-0.27px;right:412.80px;">($5,507,761)</div>
<div class="t" style="top:592.19px;font-size:11.6px;font-family:'Liberation Serif',serif;letter-spacing:-0.27px;right:317.20px;">$252,358,152</div>
<div class="r" style="left:4.00px;top:610.70px;width:8.00px;height:17.20px;background:linear-gradient(90deg,#dcdcdc,#a8a8a8);"></div>
<div class="r" style="left:13.30px;top:610.70px;width:69.50px;height:17.20px;background:#e4e4e4;"></div>
<div class="r" style="left:84.70px;top:610.70px;width:63.10px;height:17.20px;background:#e4e4e4;"></div>
<div class="r" style="left:149.60px;top:610.70px;width:124.50px;height:17.20px;background:#e4e4e4;"></div>
<div class="r" style="left:276.60px;top:610.70px;width:156.20px;height:17.20px;background:#e4e4e4;"></div>
<div class="r" style="left:434.90px;top:610.70px;width:94.20px;height:17.20px;background:#e4e4e4;"></div>
<div class="t" style="top:612.26px;font-size:10.8px;left:86.60px;">March</div>
<div class="t" style="top:611.29px;font-size:11.6px;font-family:'Liberation Serif',serif;letter-spacing:-0.27px;right:571.00px;">$288,803,899</div>
<div class="t" style="top:611.29px;font-size:11.6px;font-family:'Liberation Serif',serif;letter-spacing:-0.27px;right:412.80px;">($5,296,991)</div>
<div class="t" style="top:611.29px;font-size:11.6px;font-family:'Liberation Serif',serif;letter-spacing:-0.27px;right:317.20px;">$283,506,909</div>
<div class="r" style="left:4.00px;top:629.90px;width:8.00px;height:16.90px;background:linear-gradient(90deg,#dcdcdc,#a8a8a8);"></div>
<div class="r" style="left:13.30px;top:629.90px;width:69.50px;height:16.90px;background:#e4e4e4;"></div>
<div class="r" style="left:84.70px;top:629.90px;width:63.10px;height:16.90px;background:#e4e4e4;"></div>
<div class="t" style="top:631.46px;font-size:10.8px;left:86.60px;">April</div>
<div class="t" style="top:630.49px;font-size:11.6px;font-family:'Liberation Serif',serif;letter-spacing:-0.27px;right:571.00px;">$262,246,245</div>
<div class="t" style="top:630.49px;font-size:11.6px;font-family:'Liberation Serif',serif;letter-spacing:-0.27px;right:412.80px;">($5,186,744)</div>
<div class="t" style="top:630.49px;font-size:11.6px;font-family:'Liberation Serif',serif;letter-spacing:-0.27px;right:317.20px;">$257,059,501</div>
<div class="r" style="left:530.30px;top:46.20px;width:16.70px;height:600.70px;background:#f0f0f0;"></div>
<div class="r" style="left:531.20px;top:79.80px;width:14.70px;height:402.20px;background:#cdcdcd;"></div>
<svg width="16" height="12" style="left:531px;top:61px" viewBox="0 0 16 12"><path d="M2.7 10.2L7.7 4.8 12.7 10.2" fill="none" stroke="#5a5a5a" stroke-width="2.5"/></svg>
<svg width="16" height="12" style="left:531px;top:619px" viewBox="0 0 16 12"><path d="M2.7 3L7.7 8.4 12.7 3" fill="none" stroke="#5a5a5a" stroke-width="2.5"/></svg>
<div class="r" style="left:550.20px;top:46.40px;width:290.80px;height:600.40px;background:#c4c4c4;"></div>
<div class="r" style="left:551.40px;top:47.60px;width:287.90px;height:599.20px;background:#f0f0f0;"></div>
<div class="r" style="left:554.80px;top:47.60px;width:284.50px;height:599.20px;background:#c4c4c4;"></div>
<div class="r" style="left:556.00px;top:48.20px;width:283.30px;height:598.60px;background:#fff;"></div>
<div class="r" style="left:556.00px;top:48.20px;width:283.30px;height:17.70px;background:#336699;"></div>
<div class="r" style="left:556.00px;top:65.90px;width:283.30px;height:1.40px;background:#c4c4c4;"></div>
<div class="t" style="top:50.29px;font-size:11px;font-weight:bold;color:#fff;left:560.30px;">View Explorer</div>
<svg width="12" height="12" style="left:821px;top:51px" viewBox="0 0 12 12"><path d="M2 2.2L10 9.6M10 2.2L2 9.6" stroke="#fff" stroke-width="1.5" fill="none"/></svg>
<svg width="0" height="0" style="left:0;top:0"><defs>
<linearGradient id="fg" x1="0" x2="1" y1="0" y2="0"><stop offset="0" stop-color="#eed870"/><stop offset="0.45" stop-color="#f8eca6"/><stop offset="1" stop-color="#e6cb5e"/></linearGradient>
<linearGradient id="fb" x1="0" x2="1" y1="0" y2="0"><stop offset="0" stop-color="#f1e08a"/><stop offset="0.5" stop-color="#e9d268"/><stop offset="1" stop-color="#e3c95a"/></linearGradient>
<symbol id="fold" viewBox="0 0 16 18" overflow="visible">
<path d="M6.3 0.9q0-.6 .6-.6h4.7q.6 0 .6 .6V6.4h.3q.6 0 .6 .6v7.4q0 .6-.6 .6H6.3z" fill="url(#fb)" stroke="#d0b44a" stroke-width="0.6"/>
<rect x="10.9" y="8.3" width="1.1" height="2.7" fill="#fff"/><rect x="10.9" y="11" width="1.1" height="2.3" fill="#3c8fd8"/>
<path d="M0.3 0.9q0-.6 .6-.6h4.9q.6 0 .6 .6V15.6q0 .7-.7 .7H2.6q-.6 0-.7-.7l-.2-.7H0.9q-.6 0-.6-.6z" fill="url(#fg)" stroke="#d0b44a" stroke-width="0.6"/>
<path d="M2.2 1.6l2.4 .9V9.5" fill="none" stroke="#fff" stroke-width="0.9" opacity="0.9"/>
</symbol></defs></svg>
<div class="r" style="left:594.00px;top:75.00px;width:136.00px;height:20.00px;background:#00ffff;"></div>
<svg width="16" height="18" style="left:577.7px;top:75.8px"><use href="#fold"/></svg>
<svg width="8" height="8" style="left:563.1px;top:82.4px" viewBox="0 0 8 8"><path d="M6 1.3V5.9H1.4z" fill="#404040" stroke="#262626" stroke-width="0.7"/></svg>
<div class="t" style="top:78.76px;font-size:10.8px;left:599.80px;">Sales vs Returns All Years</div>
<svg width="16" height="18" style="left:597.9px;top:96.0px"><use href="#fold"/></svg>
<div class="t" style="top:98.99px;font-size:10.8px;left:619.90px;">Parameter Groups</div>
<svg width="16" height="18" style="left:597.9px;top:116.3px"><use href="#fold"/></svg>
<svg width="8" height="8" style="left:583.3px;top:122.9px" viewBox="0 0 8 8"><path d="M6 1.3V5.9H1.4z" fill="#404040" stroke="#262626" stroke-width="0.7"/></svg>
<div class="t" style="top:119.22px;font-size:10.8px;left:619.90px;">Grid</div>
<svg width="16" height="18" style="left:618.1px;top:136.5px"><use href="#fold"/></svg>
<svg width="8" height="8" style="left:603.5px;top:143.1px" viewBox="0 0 8 8"><path d="M6 1.3V5.9H1.4z" fill="#404040" stroke="#262626" stroke-width="0.7"/></svg>
<div class="t" style="top:139.45px;font-size:10.8px;left:640.10px;">Rows</div>
<svg width="16" height="16" style="left:636px;top:157.9px" viewBox="0 0 16 16"><g stroke="#000" stroke-width="1.1" fill="none"><path d="M3.5 1.2V12.2H14"/><path d="M1.4 3.6L3.5 1.2 5.6 3.6M11.6 10.1L14 12.2 11.6 14.3"/><path d="M4 11.8L11.4 4.2"/><path d="M8 3.7H11.9V7.6"/></g></svg>
<svg width="8" height="10" style="left:623.6px;top:160.9px" viewBox="0 0 8 10"><path d="M1 1.2L5.2 5 1 8.8z" fill="#fff" stroke="#a6a6a6" stroke-width="0.9"/></svg>
<div class="t" style="top:159.68px;font-size:10.8px;color:#0000ff;left:656.80px;">Year Months</div>
<svg width="16" height="18" style="left:618.1px;top:176.9px"><use href="#fold"/></svg>
<div class="t" style="top:179.91px;font-size:10.8px;left:640.10px;">Columns</div>
<svg width="16" height="18" style="left:618.1px;top:197.2px"><use href="#fold"/></svg>
<div class="t" style="top:200.14px;font-size:10.8px;left:640.10px;">View Filter</div>
<svg width="16" height="18" style="left:618.1px;top:217.4px"><use href="#fold"/></svg>
<svg width="8" height="8" style="left:603.5px;top:224.0px" viewBox="0 0 8 8"><path d="M6 1.3V5.9H1.4z" fill="#404040" stroke="#262626" stroke-width="0.7"/></svg>
<div class="t" style="top:220.37px;font-size:10.8px;left:640.10px;">Measure Items</div>
<svg width="14" height="12" style="left:635.8px;top:240.8px" viewBox="0 0 14 12"><rect x="0.5" y="0.5" width="12.2" height="10" fill="#fff" stroke="#000" stroke-width="1"/><text x="2.1" y="8.9" font-family="Liberation Sans, sans-serif" font-size="9.6" textLength="9.2" lengthAdjust="spacingAndGlyphs" fill="#000" stroke="#000" stroke-width="0.25">123</text></svg>
<div class="t" style="top:240.60px;font-size:10.8px;color:#0000ff;left:656.80px;">Actual Sales Sales Amount</div>
<svg width="14" height="12" style="left:635.8px;top:261.1px" viewBox="0 0 14 12"><rect x="0.5" y="0.5" width="12.2" height="10" fill="#fff" stroke="#000" stroke-width="1"/><text x="2.1" y="8.9" font-family="Liberation Sans, sans-serif" font-size="9.6" textLength="9.2" lengthAdjust="spacingAndGlyphs" fill="#000" stroke="#000" stroke-width="0.25">123</text></svg>
<div class="t" style="top:260.83px;font-size:10.8px;color:#0000ff;left:656.80px;">Actual Sales Sales Return Amount</div>
<svg width="14" height="12" style="left:636.0999999999999px;top:282.1px" viewBox="0 0 14 12"><rect x="0" y="0" width="12.9" height="11" fill="#0e1638"/><rect x="0.9" y="4" width="11.2" height="6.3" fill="#009490"/><rect x="9.9" y="1" width="2.2" height="3.2" fill="#009490"/><rect x="0.9" y="1" width="9" height="3" fill="#000"/><rect x="1.7" y="2.1" width="7.9" height="1.6" fill="#fff"/><rect x="2.8" y="2.1" width="1.2" height="1.3" fill="#ff1010"/><rect x="4.8" y="2.1" width="1.2" height="1.3" fill="#ff1010"/><rect x="6.8" y="2.1" width="1.2" height="1.3" fill="#ff1010"/><rect x="1.6" y="4.9" width="0.9" height="1.1" fill="#000"/><rect x="2.5" y="4.9" width="1.1" height="1.1" fill="#fff"/><rect x="3.6" y="4.9" width="0.9" height="1.1" fill="#000"/><rect x="4.5" y="4.9" width="1.1" height="1.1" fill="#fff"/><rect x="5.6" y="4.9" width="0.9" height="1.1" fill="#000"/><rect x="6.5" y="4.9" width="1.1" height="1.1" fill="#fff"/><rect x="7.6" y="4.9" width="0.9" height="1.1" fill="#000"/><rect x="8.5" y="4.9" width="1.1" height="1.1" fill="#fff"/><rect x="9.6" y="4.9" width="0.9" height="1.1" fill="#000"/><rect x="10.5" y="4.9" width="1.1" height="1.1" fill="#fff"/><rect x="1.6" y="6.9" width="0.9" height="1.1" fill="#000"/><rect x="2.5" y="6.9" width="1.1" height="1.1" fill="#fff"/><rect x="3.6" y="6.9" width="0.9" height="1.1" fill="#000"/><rect x="4.5" y="6.9" width="1.1" height="1.1" fill="#fff"/><rect x="5.6" y="6.9" width="0.9" height="1.1" fill="#000"/><rect x="6.5" y="6.9" width="1.1" height="1.1" fill="#fff"/><rect x="7.6" y="6.9" width="0.9" height="1.1" fill="#000"/><rect x="8.5" y="6.9" width="1.1" height="1.1" fill="#fff"/><rect x="9.6" y="6.9" width="0.9" height="1.1" fill="#000"/><rect x="10.5" y="6.9" width="1.1" height="1.1" fill="#fff"/><rect x="1.6" y="8.9" width="0.9" height="1.1" fill="#000"/><rect x="2.5" y="8.9" width="1.1" height="1.1" fill="#fff"/><rect x="3.6" y="8.9" width="0.9" height="1.1" fill="#000"/><rect x="4.5" y="8.9" width="1.1" height="1.1" fill="#fff"/><rect x="5.6" y="8.9" width="0.9" height="1.1" fill="#000"/><rect x="6.5" y="8.9" width="1.1" height="1.1" fill="#fff"/><rect x="7.6" y="8.9" width="0.9" height="1.1" fill="#000"/><rect x="8.5" y="8.9" width="1.1" height="1.1" fill="#fff"/><rect x="9.6" y="8.9" width="0.9" height="1.1" fill="#000"/><rect x="10.5" y="8.9" width="1.1" height="1.1" fill="#fff"/></svg>
<div class="t" style="top:281.06px;font-size:10.8px;color:#0000ff;left:656.80px;">Sales after Returns</div>
<svg width="16" height="18" style="left:618.1px;top:298.3px"><use href="#fold"/></svg>
<div class="t" style="top:301.29px;font-size:10.8px;left:640.10px;">Presentation</div>
<svg width="16" height="18" style="left:597.9px;top:318.6px"><use href="#fold"/></svg>
<div class="t" style="top:321.52px;font-size:10.8px;left:619.90px;">Charts</div>
<svg width="844" height="653" style="left:0;top:0;pointer-events:none" viewBox="0 0 844 653">
<defs><filter id="sh" x="-5%" y="-5%" width="112%" height="112%"><feGaussianBlur stdDeviation="1.1"/></filter></defs>
<rect x="12.7" y="87" width="143" height="561.6" rx="24" ry="24" fill="none" stroke="#000" stroke-opacity="0.38" stroke-width="2.4" filter="url(#sh)"/>
<rect x="10.7" y="85.2" width="143" height="561.6" rx="24" ry="24" fill="none" stroke="#ff0000" stroke-width="2.3"/>
<rect x="589" y="136.4" width="170.2" height="40.6" rx="20.3" ry="20.3" fill="none" stroke="#000" stroke-opacity="0.32" stroke-width="2" filter="url(#sh)"/>
<rect x="587.2" y="134.6" width="170.2" height="40.6" rx="20.3" ry="20.3" fill="none" stroke="#ff0000" stroke-width="2"/>
</svg>
<div class="r" style="left:0;top:0;width:838px;height:647px;border:3px solid #548dd4;pointer-events:none"></div>
</body></html>
